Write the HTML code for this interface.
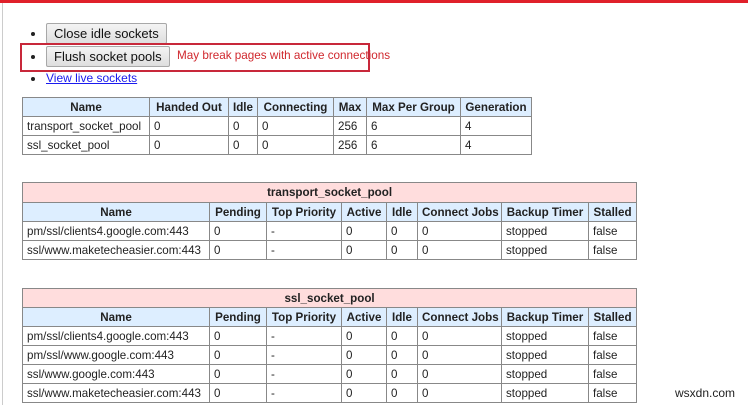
<!DOCTYPE html>
<html><head><meta charset="utf-8"><style>
body{margin:0;width:748px;height:405px;overflow:hidden;background:#fff;font-family:"Liberation Sans",sans-serif;font-size:12px;color:#222;position:relative}
.topbar{position:absolute;left:0;top:0;width:748px;height:3px;background:#e0202a}
.lside{position:absolute;left:2px;top:3px;width:1px;height:402px;background:#ccc}
.btn{position:absolute;left:46px;height:19px;border:1px solid #a8a8a8;border-radius:2px;background:linear-gradient(#f4f4f4,#dedede);font-size:13px;line-height:19px;padding:0 7px;box-sizing:content-box;color:#111}
.bul{position:absolute;left:31px;width:4px;height:4px;border-radius:50%;background:#222}
table{position:absolute;left:22px;border-collapse:collapse;table-layout:fixed;font-size:11.6px}
td,th{border:1px solid #888;padding:0 4px;height:18px;white-space:nowrap;overflow:hidden;text-align:left;font-weight:normal}
th{background:#ddeeff;font-weight:bold;text-align:center}
th.t{background:#ffdddd}
</style></head><body>
<div class="topbar"></div><div class="lside"></div>
<div class="bul" style="top:32px"></div>
<div class="btn" style="top:23px">Close idle sockets</div>
<div class="bul" style="top:55px"></div>
<div class="btn" style="top:46px">Flush socket pools</div>
<div style="position:absolute;left:177px;top:49px;color:#d0282e;font-size:11.7px">May break pages with active connections</div>
<div style="position:absolute;left:20px;top:43px;width:346px;height:25px;border:2px solid #c8283a"></div>
<div class="bul" style="top:77px"></div>
<a style="position:absolute;left:46px;top:71px;color:#1a1aee;text-decoration:underline;font-size:12px">View live sockets</a>

<table style="top:97px;width:509px">
<colgroup><col style="width:127px"><col style="width:79px"><col style="width:29px"><col style="width:76px"><col style="width:33px"><col style="width:94px"><col style="width:71px"></colgroup>
<tr><th>Name</th><th>Handed Out</th><th>Idle</th><th>Connecting</th><th>Max</th><th>Max Per Group</th><th>Generation</th></tr>
<tr><td>transport_socket_pool</td><td>0</td><td>0</td><td>0</td><td>256</td><td>6</td><td>4</td></tr>
<tr><td>ssl_socket_pool</td><td>0</td><td>0</td><td>0</td><td>256</td><td>6</td><td>4</td></tr>
</table>

<table style="top:182px;width:614px">
<colgroup><col style="width:187px"><col style="width:57px"><col style="width:75px"><col style="width:45px"><col style="width:31px"><col style="width:84px"><col style="width:87px"><col style="width:48px"></colgroup>
<tr><th class="t" colspan="8" style="height:19px">transport_socket_pool</th></tr>
<tr><th>Name</th><th>Pending</th><th>Top Priority</th><th>Active</th><th>Idle</th><th>Connect Jobs</th><th>Backup Timer</th><th>Stalled</th></tr>
<tr><td>pm/ssl/clients4.google.com:443</td><td>0</td><td>-</td><td>0</td><td>0</td><td>0</td><td>stopped</td><td>false</td></tr>
<tr><td>ssl/www.maketecheasier.com:443</td><td>0</td><td>-</td><td>0</td><td>0</td><td>0</td><td>stopped</td><td>false</td></tr>
</table>

<table style="top:288px;width:614px">
<colgroup><col style="width:187px"><col style="width:57px"><col style="width:75px"><col style="width:45px"><col style="width:31px"><col style="width:84px"><col style="width:87px"><col style="width:48px"></colgroup>
<tr><th class="t" colspan="8">ssl_socket_pool</th></tr>
<tr><th>Name</th><th>Pending</th><th>Top Priority</th><th>Active</th><th>Idle</th><th>Connect Jobs</th><th>Backup Timer</th><th>Stalled</th></tr>
<tr><td>pm/ssl/clients4.google.com:443</td><td>0</td><td>-</td><td>0</td><td>0</td><td>0</td><td>stopped</td><td>false</td></tr>
<tr><td>pm/ssl/www.google.com:443</td><td>0</td><td>-</td><td>0</td><td>0</td><td>0</td><td>stopped</td><td>false</td></tr>
<tr><td>ssl/www.google.com:443</td><td>0</td><td>-</td><td>0</td><td>0</td><td>0</td><td>stopped</td><td>false</td></tr>
<tr><td>ssl/www.maketecheasier.com:443</td><td>0</td><td>-</td><td>0</td><td>0</td><td>0</td><td>stopped</td><td>false</td></tr>
</table>
<div style="position:absolute;left:675px;top:386px;font-size:12px;color:#222">wsxdn.com</div>
</body></html>
